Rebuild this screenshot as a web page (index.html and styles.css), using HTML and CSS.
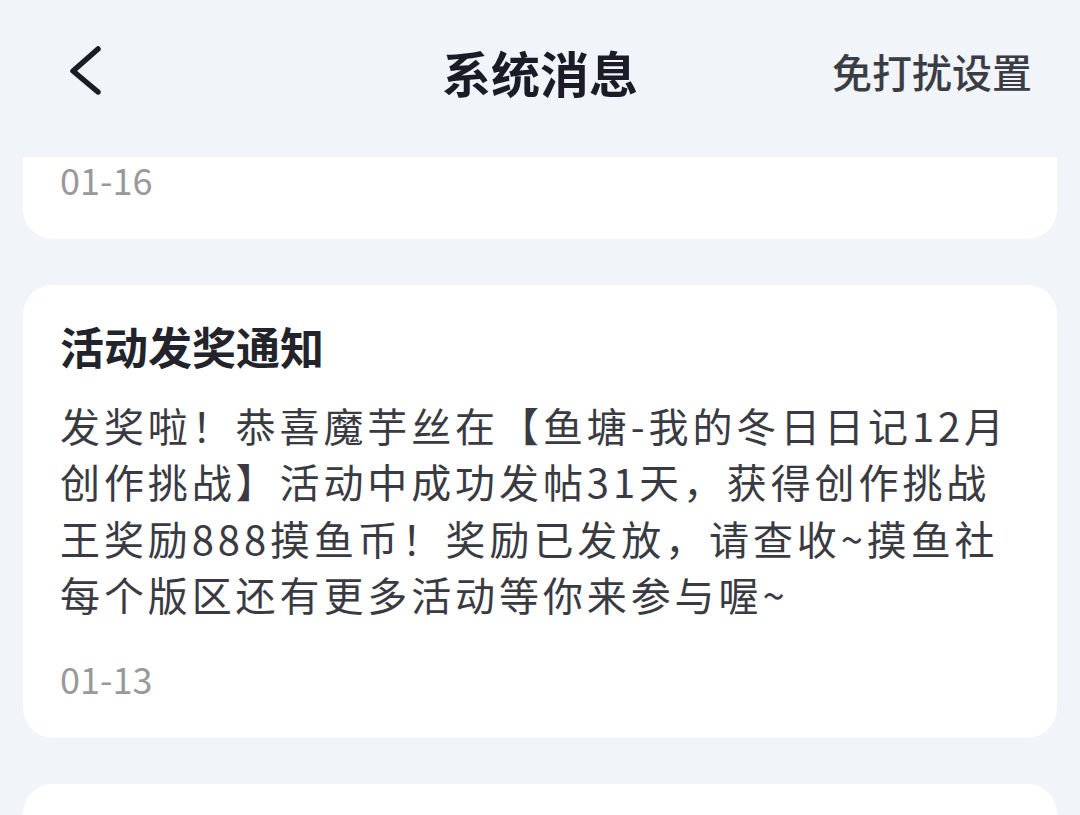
FILE: index.html
```html
<!DOCTYPE html>
<html lang="zh-CN">
  <head>
    <meta charset="UTF-8" />
    <meta name="viewport" content="width=device-width, initial-scale=1.0" />
    <title>系统消息</title>
    <link rel="stylesheet" href="styles.css">
  </head>
  <body>
    <div class="page">
      <!-- Top bar -->
      <header class="navbar">
        <button class="back" aria-label="返回">
          <svg width="48" height="56" viewBox="0 0 48 56">
            <path d="M38 6 L13 28 L38 49" fill="none" stroke="#1b1c27" stroke-width="5.5" stroke-linecap="round" stroke-linejoin="round" />
          </svg>
        </button>
        <h1 class="navbar-title">系统消息</h1>
        <a class="navbar-action" href="#">免打扰设置</a>
      </header>

      <!-- Message list -->
      <main class="list">
        <div class="card card-cut">
          <p class="date">01-16</p>
        </div>

        <div class="card">
          <h3 class="card-title">活动发奖通知</h3>
          <p class="card-text">发奖啦！恭喜魔芋丝在【鱼塘-我的冬日日记12月创作挑战】活动中成功发帖31天，获得创作挑战王奖励888摸鱼币！奖励已发放，请查收~摸鱼社每个版区还有更多活动等你来参与喔~</p>
          <p class="date">01-13</p>
        </div>

        <div class="card card-next"></div>
      </main>
    </div>
  </body>
</html>
```

FILE: styles.css
```css
body {
  margin: 0;
  background: #f1f4f8;
  font-family: "Noto Sans CJK SC", "Noto Sans", sans-serif;
}
.page {
  height: 815px;
  overflow: hidden;
}
.navbar {
  height: 142px;
  display: grid;
  grid-template-columns: 1fr auto 1fr;
  align-items: center;
  padding: 0 48px;
}
.back {
  justify-self: start;
  display: flex;
  margin-left: 12px;
  padding: 0;
  border: none;
  background: none;
}
.navbar-title {
  margin: 0;
  font-size: 49px;
  font-weight: 700;
  color: #1b1c27;
}
.navbar-action {
  justify-self: end;
  font-size: 40px;
  font-weight: 500;
  color: #3b3d45;
  text-decoration: none;
}
.list {
  display: flex;
  flex-direction: column;
  gap: 46px;
  padding: 15px 23px 0;
}
.card {
  background: #fff;
  border-radius: 30px;
  padding: 33px 37px 35px;
}
.card-cut {
  border-radius: 0 0 30px 30px;
  padding-top: 0;
}
.card-next {
  min-height: 80px;
}
.card-title {
  margin: 0;
  font-size: 44px;
  line-height: 56px;
  font-weight: 700;
  color: #22232b;
}
.card-text {
  margin: 23px 0 0;
  font-size: 40px;
  line-height: 56.3px;
  letter-spacing: 3.9px;
  color: #3a3b42;
}
.date {
  margin: 31px 0 0;
  font-size: 36px;
  line-height: 50px;
  color: #999;
}
.card-cut .date {
  margin-top: -3px;
}
```
